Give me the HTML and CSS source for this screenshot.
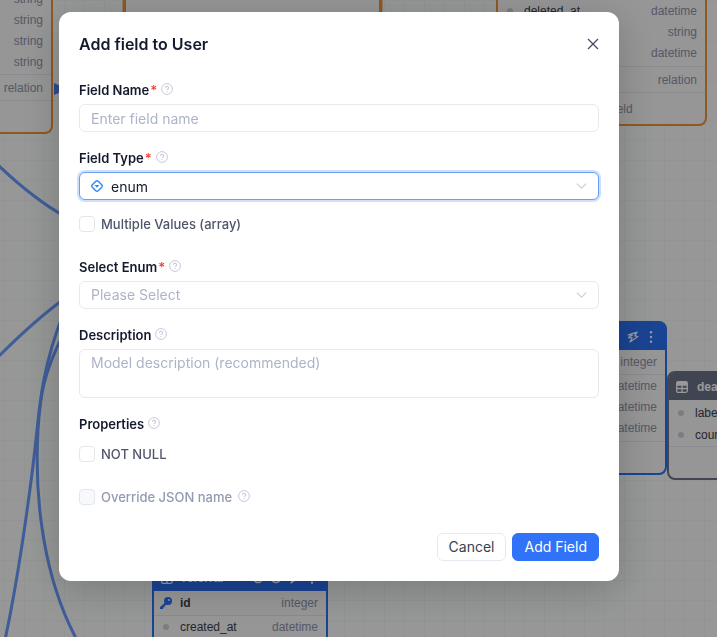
FILE: index.html
```
<!DOCTYPE html>
<html lang="en">
<head>
    <meta charset="UTF-8">
    <meta name="viewport" content="width=device-width, initial-scale=1.0">
    <title>Add field to User</title>
    <link rel="stylesheet" href="styles.css">
</head>
<body>
    <!-- Icons -->
    <svg class="sprite" aria-hidden="true">
        <symbol id="i-help" viewBox="0 0 12 12">
            <circle cx="6" cy="6" r="5.4" fill="none" stroke="currentColor"/>
            <path d="M4.400 4.800a1.600 1.500 0 1 1 2.500 1.200c-.6.4-.9.5-.9 1.100" fill="none" stroke="currentColor" stroke-width="1.100"/>
            <circle cx="6" cy="8.600" r=".7" fill="currentColor"/>
        </symbol>
        <symbol id="i-chevron" viewBox="0 0 12 12">
            <path d="M1 3.500l5 5 5-5" fill="none" stroke="currentColor" stroke-width="1.200"/>
        </symbol>
        <symbol id="i-table" viewBox="0 0 12 12">
            <path d="M.7 2.200Q.7.700 2.200.700h7.600q1.500 0 1.500 1.500v7.600q0 1.500-1.500 1.500H2.200Q.7 11.300.700 9.800zM.7 4h10.600M.7 7.500h10.600M6 4v7.300" fill="none" stroke="currentColor" stroke-width="1.300"/>
            <path d="M1 1h10v3H1z" fill="currentColor"/>
        </symbol>
        <symbol id="i-bolt" viewBox="0 0 12 12">
            <path d="M1.200 3.900L10.200 1 7.700 4.900l3.300.6L3 11l2.200-4.200L1.500 6.600 5.600 4z" fill="none" stroke="currentColor" stroke-width="1.200" stroke-linejoin="round"/>
        </symbol>
        <symbol id="i-more" viewBox="0 0 12 12">
            <circle cx="6" cy="1.300" r="1.200" fill="currentColor"/>
            <circle cx="6" cy="6" r="1.200" fill="currentColor"/>
            <circle cx="6" cy="10.700" r="1.200" fill="currentColor"/>
        </symbol>
        <symbol id="i-ring" viewBox="0 0 12 12">
            <circle cx="6" cy="6" r="4.500" fill="none" stroke="currentColor" stroke-width="1.300"/>
        </symbol>
        <symbol id="i-key" viewBox="0 0 12 12">
            <circle cx="8" cy="4" r="4" fill="currentColor"/>
            <path d="M6 5L0 10v2h3v-1.500h1.500V9L7.500 7z" fill="currentColor"/>
            <circle cx="9" cy="3" r="1" fill="#fafafa"/>
        </symbol>
    </svg>

    <!-- Schema canvas -->
    <main class="canvas">
        <svg class="links" aria-hidden="true">
            <path d="M-2 165C20 186 44 205 66 217"/>
            <path d="M-2 357C20 335 42 315 64 299"/>
            <path d="M64 312C44 362 40 400 37 430S22 560 5 640"/>
            <path d="M64 333C42 375 40 400 38 430C34 500 44 580 78 642"/>
            <path class="arrow" d="M54 83l7 3v6l-7 3z"/>
        </svg>

        <section class="node node-orange node-left">
            <div class="row"><span>string</span></div>
            <div class="row"><span>string</span></div>
            <div class="row"><span>string</span></div>
            <div class="row"><span>string</span></div>
            <div class="row relation"><span>relation</span></div>
            <footer></footer>
        </section>

        <section class="node node-orange node-selected"></section>

        <section class="node node-orange node-right">
            <div class="row"><i></i><em>deleted_at</em><span>datetime</span></div>
            <div class="row"><span>string</span></div>
            <div class="row"><span>datetime</span></div>
            <div class="row relation"><span>relation</span></div>
            <footer>+ Add field</footer>
        </section>

        <section class="node node-blue node-events">
            <header>
                <svg class="push"><use href="#i-bolt"/></svg>
                <svg><use href="#i-more"/></svg>
            </header>
            <div class="row key"><span>integer</span></div>
            <div class="row"><span>datetime</span></div>
            <div class="row"><span>datetime</span></div>
            <div class="row"><span>datetime</span></div>
            <footer></footer>
        </section>

        <section class="node node-dark node-deals">
            <header><svg class="icon"><use href="#i-table"/></svg>deals</header>
            <div class="row"><i></i><em>label</em></div>
            <div class="row"><i></i><em>count</em></div>
            <footer></footer>
        </section>

        <section class="node node-blue node-referral">
            <header>
                <svg class="icon"><use href="#i-table"/></svg>referral
                <svg class="push"><use href="#i-ring"/></svg>
                <svg><use href="#i-ring"/></svg>
                <svg><use href="#i-bolt"/></svg>
                <svg><use href="#i-more"/></svg>
            </header>
            <div class="row key"><svg><use href="#i-key"/></svg><b>id</b><span>integer</span></div>
            <div class="row"><i></i><em>created_at</em><span>datetime</span></div>
        </section>
    </main>

    <!-- Add field dialog -->
    <div class="overlay">
        <form class="modal" role="dialog" aria-labelledby="modal-title">
            <div class="modal-head">
                <h1 id="modal-title">Add field to User</h1>
                <button type="button" class="close" aria-label="Close">
                    <svg viewBox="0 0 12 12"><path d="M1 1l10 10M11 1L1 11" stroke="currentColor" stroke-width="1.3"/></svg>
                </button>
            </div>

            <div class="field">
                <div class="label"><label for="name">Field Name</label><span class="required">*</span><svg class="help"><use href="#i-help"/></svg></div>
                <input class="control" id="name" type="text" placeholder="Enter field name">
            </div>

            <div class="field">
                <div class="label"><label for="type">Field Type</label><span class="required">*</span><svg class="help"><use href="#i-help"/></svg></div>
                <div class="control select focused">
                    <svg class="type-icon" viewBox="0 0 12 12">
                        <path d="M4.800 1.300Q6 .2 7.200 1.300L10.700 4.800Q11.800 6 10.700 7.200L7.200 10.700Q6 11.800 4.800 10.700L1.300 7.200Q.2 6 1.300 4.800z" fill="none" stroke="currentColor" stroke-width="1.400"/>
                        <path d="M3.600 5h4.800L6 7.800z" fill="currentColor"/>
                    </svg>
                    <select id="type"><option>enum</option></select>
                    <svg class="chevron"><use href="#i-chevron"/></svg>
                </div>
            </div>

            <div class="check">
                <input type="checkbox" id="multiple">
                <label for="multiple">Multiple Values (array)</label>
            </div>

            <div class="field">
                <div class="label"><label for="enum">Select Enum</label><span class="required">*</span><svg class="help"><use href="#i-help"/></svg></div>
                <div class="control select">
                    <select id="enum" class="empty"><option>Please Select</option></select>
                    <svg class="chevron"><use href="#i-chevron"/></svg>
                </div>
            </div>

            <div class="field">
                <div class="label"><label for="description">Description</label><svg class="help"><use href="#i-help"/></svg></div>
                <textarea class="control" id="description" placeholder="Model description (recommended)"></textarea>
            </div>

            <div class="label">Properties<svg class="help"><use href="#i-help"/></svg></div>
            <div class="check check-first">
                <input type="checkbox" id="not-null">
                <label for="not-null">NOT NULL</label>
            </div>
            <div class="check disabled">
                <input type="checkbox" id="override" disabled>
                <label for="override">Override JSON name</label>
                <svg class="help"><use href="#i-help"/></svg>
            </div>

            <div class="actions">
                <button type="button" class="btn">Cancel</button>
                <button type="submit" class="btn btn-primary">Add Field</button>
            </div>
        </form>
    </div>
</body>
</html>
```

FILE: styles.css
```
* {
    margin: 0;
    padding: 0;
    box-sizing: border-box;
}

body {
    min-height: 100vh;
    font-family: Inter, "Liberation Sans", sans-serif;
    font-size: 14px;
    color: #14192d;
    overflow: hidden;
}

button, input, select, textarea {
    font: inherit;
    color: inherit;
}

svg {
    flex: none;
    width: 12px;
    height: 12px;
}

.sprite {
    position: absolute;
    width: 0;
    height: 0;
}

/* Canvas */
.canvas {
    position: fixed;
    inset: 0;
    overflow: hidden;
    font-family: "Liberation Sans", Arial, sans-serif;
    font-size: 12px;
    background-color: #fafcfb;
    background-image:
        linear-gradient(#f3f6f5 1px, transparent 1px),
        linear-gradient(90deg, #f3f6f5 1px, transparent 1px);
    background-size: 20px 20px;
    background-position: 4px 0;
}

.links {
    position: absolute;
    width: 100%;
    height: 100%;
}

.links path {
    fill: none;
    stroke: #6b9bff;
    stroke-width: 3;
}

.links .arrow {
    fill: #4a80f5;
    stroke: none;
}

/* Tables on the canvas */
.node {
    position: absolute;
    border: 2px solid var(--tone);
    border-radius: 8px;
    background: #fafafa;
}

.node-orange { --tone: #f0933a; }
.node-blue { --tone: #2b70f5; }
.node-dark { --tone: #6d7488; }

.node-left { left: -131px; top: -12px; width: 184px; }
.node-selected { left: 123px; top: -80px; width: 259px; height: 200px; border-width: 3px; box-shadow: 0 0 0 1px #f0cfa8; }
.node-right { left: 496px; top: 0; width: 211px; }
.node-events { left: 491px; top: 321px; width: 176px; }
.node-deals { left: 667px; top: 371px; width: 176px; }
.node-referral { left: 152px; top: 562px; width: 176px; height: 155px; }

.node-left, .node-right {
    border-top: none;
    border-radius: 0 0 8px 8px;
}

.node header {
    display: flex;
    align-items: center;
    gap: 6px;
    height: 27px;
    padding: 0 8px 0 7px;
    border-radius: 5px 5px 0 0;
    background: var(--tone);
    color: #fff;
    font-weight: bold;
}

.node .icon {
    margin-right: 3px;
}

.node .push {
    margin-left: auto;
}

.row {
    display: flex;
    align-items: center;
    gap: 8px;
    height: 21px;
    padding: 0 8px 0 6px;
}

.row svg {
    color: #2b70f5;
}

.row i {
    width: 6px;
    height: 6px;
    margin: 0 3px;
    border-radius: 50%;
    background: #cdd0dc;
}

.row em {
    font-style: normal;
    color: #3c4150;
}

.row b {
    color: #3c4150;
}

.row span {
    margin-left: auto;
    color: #8e94ac;
}

.row.key {
    height: 25px;
    border-bottom: 1px solid #e6e8f0;
}

.row.relation {
    height: 26px;
    margin-top: 2px;
    border-top: 1px solid #e6e8f0;
}

.node footer {
    height: 32px;
    padding-left: 6px;
    border-top: 1px solid #e6e8f0;
    line-height: 32px;
    text-align: center;
    color: #8e94ac;
}

.node-events footer {
    margin-top: 3px;
}

.node-right .relation {
    margin-top: 3px;
}

.node-deals header {
    margin-bottom: 2px;
}

.node-deals .row {
    height: 22px;
}

/* Dialog */
.overlay {
    position: relative;
    display: flex;
    align-items: flex-start;
    min-height: 100vh;
    padding: 12px 98px 12px 59px;
    background: rgba(0, 0, 0, 0.4);
}

.modal {
    flex: 1;
    padding: 20px;
    border-radius: 12px;
    background: #fff;
    box-shadow: 0 8px 40px rgba(0, 0, 0, 0.2);
}

.modal-head {
    display: flex;
    align-items: center;
    justify-content: space-between;
    height: 24px;
    margin-bottom: 24px;
}

h1 {
    font-size: 16px;
    font-weight: 600;
}

.close {
    display: flex;
    border: none;
    background: none;
    color: #464c5e;
    cursor: pointer;
}

.field {
    margin-bottom: 16px;
}

.label {
    display: flex;
    align-items: center;
    height: 20px;
    font-size: 13px;
    font-weight: 600;
}

.required {
    margin-left: 1px;
    color: #f04438;
}

.help {
    margin: 0 0 2px 4px;
    color: #c5c9da;
}

.control {
    display: block;
    width: 100%;
    height: 28px;
    margin-top: 4px;
    padding: 0 11px;
    border: 1px solid #e8e9f0;
    border-radius: 6px;
    outline: none;
    background: #fff;
}

.control::placeholder {
    color: #adb4c8;
}

textarea.control {
    height: 49px;
    padding-top: 3px;
    line-height: 20px;
    resize: none;
}

.select {
    display: flex;
    align-items: center;
    gap: 8px;
}

.select select {
    flex: 1;
    border: none;
    outline: none;
    background: none;
    appearance: none;
}

.select .empty {
    padding-bottom: 1px;
    color: #adb4c8;
}

.focused {
    border-color: #6b9df8;
    box-shadow: 0 0 0 2px #cfe0fc;
}

.type-icon {
    color: #2f86f6;
}

.chevron {
    width: 11px;
    color: #c5c9da;
}

.check {
    display: flex;
    align-items: center;
    height: 20px;
    margin: -2px 0 23px;
    font-size: 13px;
    font-weight: 500;
    color: #50566a;
}

.check input {
    width: 16px;
    height: 16px;
    margin-right: 6px;
    border: 1px solid #e4e6ee;
    border-radius: 4px;
    background: #fff;
    appearance: none;
}

.check-first {
    margin-top: 10px;
}

.disabled {
    margin: 0;
    color: #929ab2;
}

.disabled input {
    background: #f8f9fb;
}

.disabled .help {
    margin-left: 6px;
}

.actions {
    display: flex;
    justify-content: flex-end;
    gap: 6px;
    margin-top: 26px;
}

.btn {
    height: 28px;
    padding: 0 11px 1px;
    border: 1px solid #e8e9f0;
    border-radius: 6px;
    background: #fff;
    color: #383e50;
    cursor: pointer;
}

.btn-primary {
    border-color: #3073f8;
    background: #3073f8;
    color: #fff;
}
```
